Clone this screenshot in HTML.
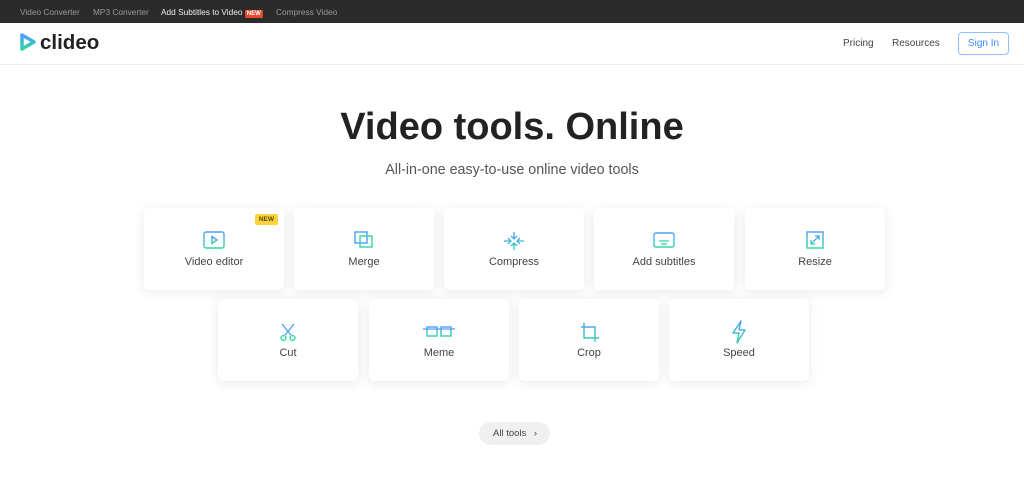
<!DOCTYPE html>
<html><head><meta charset="utf-8"><style>
*{margin:0;padding:0;box-sizing:border-box}
body{width:1024px;height:477px;background:#fff;font-family:"Liberation Sans",sans-serif;position:relative;overflow:hidden;color:#222}
.top{position:absolute;left:0;top:0;width:1024px;height:23px;background:#2b2b2b;font-size:8.3px;color:#999}
.top span{position:absolute;top:7px}
.new{background:#e8482c;color:#fff;font-size:6px;font-weight:bold;padding:1px 2px;border-radius:1px}
.hdr{position:absolute;left:0;top:23px;width:1024px;height:42px;border-bottom:1px solid #eee}
.logo{position:absolute;left:40px;top:8px;font-size:20.5px;font-weight:bold;color:#222}
.nav{position:absolute;top:15px;font-size:10px;color:#444}
.sign{position:absolute;left:958px;top:9px;width:51px;height:23px;border:1px solid #8fc0ff;border-radius:4px;color:#3d8ef8;font-size:10px;text-align:center;line-height:21px}
h1{position:absolute;left:0;width:1024px;top:106px;text-align:center;font-size:38px;font-weight:bold;color:#222}
.sub{position:absolute;left:0;width:1024px;top:162px;text-align:center;font-size:14.3px;color:#555}
.card{position:absolute;width:140px;height:82px;background:#fff;border-radius:5px;box-shadow:0 2px 12px rgba(0,0,0,0.09);text-align:center}
.card svg{position:absolute;left:59px;top:23px}
.card .l{position:absolute;left:0;width:100%;top:48px;font-size:11px;color:#444}
.badge{position:absolute;right:6px;top:6px;background:#fdd23b;color:#5a4800;font-size:6.5px;font-weight:bold;padding:2px 4px;border-radius:2px}
.all{position:absolute;left:479px;top:422px;width:71px;height:23px;border-radius:12px;background:#f0f0f0;font-size:9.5px;color:#444;line-height:23px;padding-left:14px}
</style></head><body>
<svg width="0" height="0" style="position:absolute"><defs><linearGradient id="g" x1="0" y1="0" x2="0" y2="1"><stop offset="0" stop-color="#4f9dfc"/><stop offset="1" stop-color="#2fd6a5"/></linearGradient></defs></svg>
<div class="top">
<span style="left:20px">Video Converter</span>
<span style="left:93px">MP3 Converter</span>
<span style="left:161px;color:#eee">Add Subtitles to Video <span class="new" style="position:static">NEW</span></span>
<span style="left:276px">Compress Video</span>
</div>
<div class="hdr">
<svg style="position:absolute;left:19px;top:10px" width="17" height="18" viewBox="0 0 17 18"><path d="M3 2 L15 9 L3 16 Z" fill="none" stroke="url(#g)" stroke-width="3.5" stroke-linejoin="round"/></svg>
<div class="logo">clideo</div>
<div class="nav" style="left:843px">Pricing</div>
<div class="nav" style="left:892px">Resources</div>
<div class="sign">Sign In</div>
</div>
<h1>Video tools. Online</h1>
<div class="sub">All-in-one easy-to-use online video tools</div>

<div class="card" style="left:144px;top:208px"><div class="badge">NEW</div><svg width="22" height="18" viewBox="0 0 22 18"><rect x="1" y="1" width="20" height="16" rx="2" fill="none" stroke="url(#g)" stroke-width="1.4"/><path d="M9 5.5 L14 9 L9 12.5 Z" fill="none" stroke="url(#g)" stroke-width="1.4"/></svg><div class="l">Video editor</div></div>
<div class="card" style="left:294px;top:208px"><svg width="22" height="18" viewBox="0 0 22 18"><rect x="2" y="1" width="12" height="11" fill="none" stroke="#4f9dfc" stroke-width="1.4"/><rect x="7" y="5" width="12" height="11" fill="none" stroke="#2fd6a5" stroke-width="1.4"/></svg><div class="l">Merge</div></div>
<div class="card" style="left:444px;top:208px"><svg width="22" height="20" viewBox="0 0 22 20"><path d="M11 1v7M8 5l3 3 3-3M11 19v-7M8 15l3-3 3 3M1 10h7M5 7l3 3-3 3M21 10h-7M17 7l-3 3 3 3" fill="none" stroke="url(#g)" stroke-width="1.3"/></svg><div class="l">Compress</div></div>
<div class="card" style="left:594px;top:208px"><svg width="22" height="18" viewBox="0 0 22 18"><rect x="1" y="2" width="20" height="14" rx="2" fill="none" stroke="url(#g)" stroke-width="1.4"/><path d="M6 10h10M8 13h6" stroke="#2fd6a5" stroke-width="1.3"/></svg><div class="l">Add subtitles</div></div>
<div class="card" style="left:745px;top:208px"><svg width="22" height="18" viewBox="0 0 22 18"><rect x="3" y="1" width="16" height="16" fill="none" stroke="url(#g)" stroke-width="1.4"/><path d="M7 13l8-8M11 5h4v4M7 9v4h4" fill="none" stroke="url(#g)" stroke-width="1.3"/></svg><div class="l">Resize</div></div>

<div class="card" style="left:218px;top:299px"><svg width="22" height="22" viewBox="0 0 22 22"><path d="M5 2l9 11M17 2l-9 11" stroke="#4f9dfc" stroke-width="1.3"/><circle cx="6.5" cy="16" r="2.5" fill="none" stroke="#2fd6a5" stroke-width="1.3"/><circle cx="15.5" cy="16" r="2.5" fill="none" stroke="#2fd6a5" stroke-width="1.3"/></svg><div class="l">Cut</div></div>
<div class="card" style="left:369px;top:299px"><svg width="34" height="14" viewBox="0 0 34 14" style="left:53px;top:26px"><path d="M1 4h32" stroke="#4f9dfc" stroke-width="1.3"/><rect x="5" y="2" width="10" height="9" fill="none" stroke="url(#g)" stroke-width="1.4"/><rect x="19" y="2" width="10" height="9" fill="none" stroke="url(#g)" stroke-width="1.4"/></svg><div class="l">Meme</div></div>
<div class="card" style="left:519px;top:299px"><svg width="22" height="22" viewBox="0 0 22 22"><path d="M6 1v15h15M3 5h14v15" fill="none" stroke="url(#g)" stroke-width="1.4"/></svg><div class="l">Crop</div></div>
<div class="card" style="left:669px;top:299px"><svg width="22" height="24" viewBox="0 0 22 24" style="top:21px"><path d="M13 1L5 13h6l-2 10 8-13h-6z" fill="none" stroke="url(#g)" stroke-width="1.4" stroke-linejoin="round"/></svg><div class="l">Speed</div></div>

<div class="all">All tools <span style="margin-left:5px">›</span></div>
</body></html>
